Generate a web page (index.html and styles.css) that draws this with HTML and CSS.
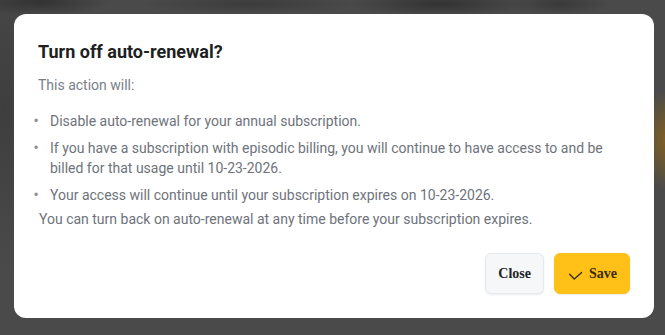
FILE: index.html
```html
<!DOCTYPE html>
<html lang="en">
<head>
<meta charset="utf-8">
<title>Turn off auto-renewal?</title>
<link rel="stylesheet" href="styles.css">
</head>
<body>
<div class="overlay">
  <div class="modal" role="dialog" aria-labelledby="title">
    <h2 class="title" id="title">Turn off auto-renewal?</h2>
    <p class="intro">This action will:</p>
    <ul class="list">
      <li>Disable auto-renewal for your annual subscription.</li>
      <li>If you have a subscription with episodic billing, you will continue to have access to and be billed for that usage until 10-23-2026.</li>
      <li>Your access will continue until your subscription expires on 10-23-2026.</li>
    </ul>
    <p class="note">You can turn back on auto-renewal at any time before your subscription expires.</p>
    <div class="actions">
      <button class="btn btn-close" type="button">Close</button>
      <button class="btn btn-save" type="button">
        <svg class="check" width="16" height="16" viewBox="0 0 16 16" aria-hidden="true"><path d="M2.6 8.2 L7.3 13 L14.6 6.4" fill="none" stroke="#3a2a05" stroke-width="1.3" stroke-linecap="round" stroke-linejoin="round"/></svg>
        <span>Save</span>
      </button>
    </div>
  </div>
</div>
</body>
</html>
```
FILE: styles.css
```css
html, body {
  margin: 0;
  padding: 0;
  height: 100%;
}
body {
  background-color: #4a4a4a;
  background-image:
    radial-gradient(ellipse 30px 50px at 668px 140px, rgba(150, 105, 20, 0.75), rgba(74, 74, 74, 0) 100%),
    radial-gradient(ellipse 70px 14px at 40px 2px, rgba(40, 40, 40, 0.7), rgba(74, 74, 74, 0) 100%),
    radial-gradient(ellipse 110px 10px at 250px 4px, rgba(50, 50, 50, 0.6), rgba(74, 74, 74, 0) 100%),
    radial-gradient(ellipse 90px 12px at 440px 4px, rgba(40, 40, 40, 0.7), rgba(74, 74, 74, 0) 100%),
    radial-gradient(ellipse 50px 10px at 560px 4px, rgba(45, 45, 45, 0.6), rgba(74, 74, 74, 0) 100%),
    radial-gradient(ellipse 40px 160px at 4px 110px, rgba(50, 50, 50, 0.5), rgba(74, 74, 74, 0) 100%);
  background-repeat: no-repeat;
  font-family: Roboto, "Liberation Sans", sans-serif;
}
.overlay {
  padding: 14px 11px 14px 14px;
}
.modal {
  background: #ffffff;
  border-radius: 12px;
  padding: 24px 24px 24px 24px;
  display: flex;
  flex-direction: column;
}
.title {
  margin: 0 0 9px 0;
  font-size: 18px;
  line-height: 28px;
  font-weight: 700;
  color: #1d1f22;
}
.intro {
  margin: 0 0 16px 0;
  font-size: 14px;
  line-height: 20px;
  color: #7a8088;
}
.list {
  margin: 0;
  padding: 0;
  list-style: none;
  display: flex;
  flex-direction: column;
  gap: 7px;
}
.list li {
  display: flex;
  font-size: 14px;
  line-height: 20px;
  color: #6e737b;
}
.list li::before {
  content: "\2022";
  flex: 0 0 12px;
  color: #8d9198;
  font-family: "Liberation Sans", sans-serif;
  font-size: 12px;
  line-height: 20px;
  margin-left: -4px;
  margin-right: 4px;
}
.note {
  margin: 4px 0 0 1px;
  font-size: 14px;
  line-height: 20px;
  color: #6e737b;
}
.actions {
  margin-top: 24px;
  display: flex;
  justify-content: flex-end;
  gap: 10px;
}
.btn {
  height: 41px;
  padding: 0 12px;
  border-radius: 6px;
  font-family: "Liberation Serif", serif;
  font-weight: 700;
  font-size: 14px;
  display: flex;
  align-items: center;
  gap: 6px;
  cursor: pointer;
  box-shadow: 0 1px 2px rgba(0, 0, 0, 0.08);
}
.btn-close {
  background: #f6f7f9;
  border: 1px solid #e6e9ee;
  color: #1f2328;
}
.btn-save {
  background: #ffc117;
  border: 1px solid #ffc117;
  color: #3a2a05;
}
.check {
  display: block;
}
```
